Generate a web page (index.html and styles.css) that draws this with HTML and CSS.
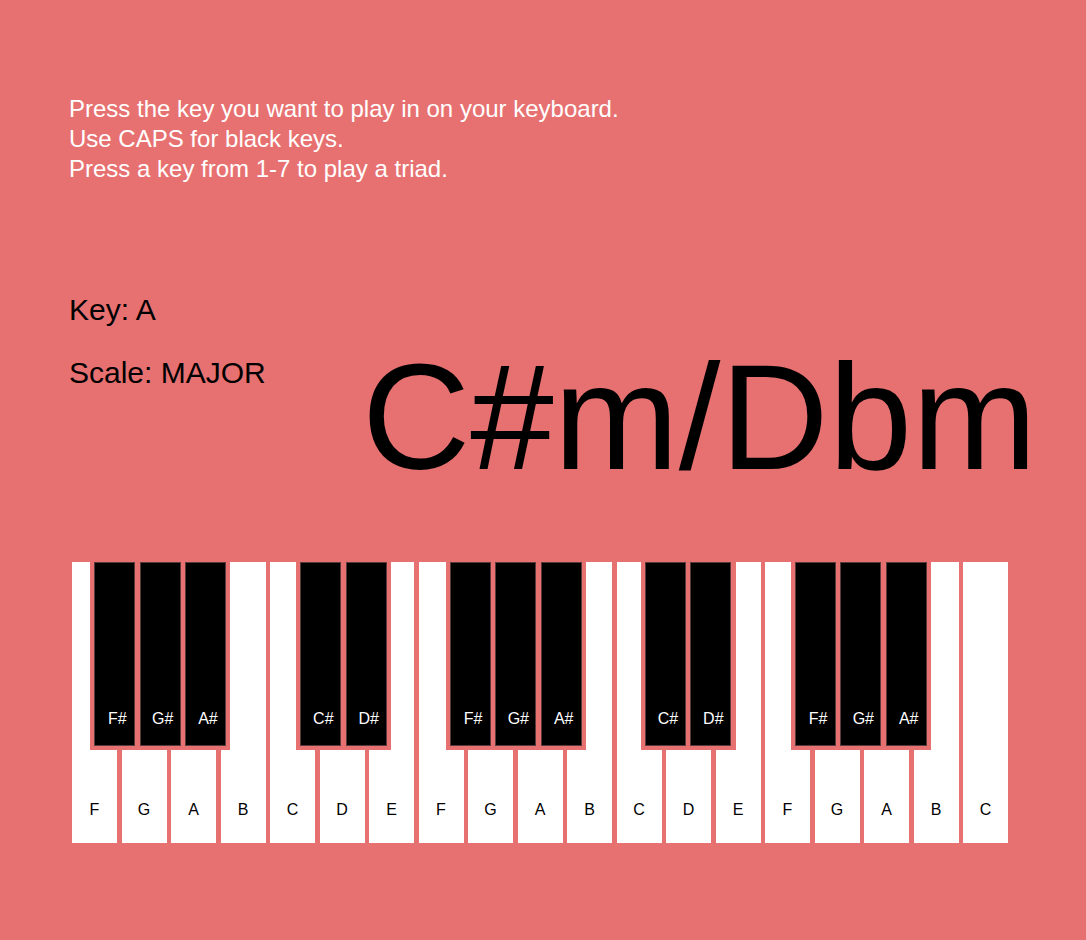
FILE: index.html
```html
<!DOCTYPE html>
<html lang="en">
<head>
<meta charset="utf-8">
<title>Piano Chords</title>
<link rel="stylesheet" href="styles.css">
</head>
<body>
<main class="page">
  <div class="instructions">
    <p>Press the key you want to play in on your keyboard.</p>
    <p>Use CAPS for black keys.</p>
    <p>Press a key from 1-7 to play a triad.</p>
  </div>
  <section class="info">
    <div class="labels">
      <p class="label">Key: A</p>
      <p class="label label-scale">Scale: MAJOR</p>
    </div>
    <div class="chord">C#m/Dbm</div>
  </section>
  <section class="keyboard">
    <div class="white-keys">
      <div class="white"><span>F</span></div>
      <div class="white"><span>G</span></div>
      <div class="white"><span>A</span></div>
      <div class="white"><span>B</span></div>
      <div class="white"><span>C</span></div>
      <div class="white"><span>D</span></div>
      <div class="white"><span>E</span></div>
      <div class="white"><span>F</span></div>
      <div class="white"><span>G</span></div>
      <div class="white"><span>A</span></div>
      <div class="white"><span>B</span></div>
      <div class="white"><span>C</span></div>
      <div class="white"><span>D</span></div>
      <div class="white"><span>E</span></div>
      <div class="white"><span>F</span></div>
      <div class="white"><span>G</span></div>
      <div class="white"><span>A</span></div>
      <div class="white"><span>B</span></div>
      <div class="white"><span>C</span></div>
    </div>
    <div class="black-group g1">
      <div class="black"><span>F#</span></div>
      <div class="black"><span>G#</span></div>
      <div class="black"><span>A#</span></div>
    </div>
    <div class="black-group g2">
      <div class="black"><span>C#</span></div>
      <div class="black"><span>D#</span></div>
    </div>
    <div class="black-group g3">
      <div class="black"><span>F#</span></div>
      <div class="black"><span>G#</span></div>
      <div class="black"><span>A#</span></div>
    </div>
    <div class="black-group g4">
      <div class="black"><span>C#</span></div>
      <div class="black"><span>D#</span></div>
    </div>
    <div class="black-group g5">
      <div class="black"><span>F#</span></div>
      <div class="black"><span>G#</span></div>
      <div class="black"><span>A#</span></div>
    </div>
  </section>
</main>
</body>
</html>
```
FILE: styles.css
```css
html, body {
  margin: 0;
  padding: 0;
}

body {
  background: #e77171;
  font-family: "Liberation Sans", Arial, sans-serif;
  color: #000;
  min-height: 940px;
}

p {
  margin: 0;
}

.page {
  padding: 94px 0 0 69px;
}

.instructions {
  color: #fff;
  font-size: 24px;
  line-height: 30px;
}

.info {
  display: flex;
  margin-top: 108px;
}

.labels {
  width: 293px;
  flex: none;
}

.label {
  font-size: 30px;
  line-height: 36px;
}

.label-scale {
  margin-top: 27px;
}

.chord {
  font-size: 150px;
  line-height: 150px;
  margin-top: 50px;
  white-space: nowrap;
}

.keyboard {
  position: relative;
  margin: 70px 0 0 3px;
  width: 936px;
  height: 281px;
}

.white-keys {
  display: flex;
  gap: 4.5px;
  height: 100%;
}

.white {
  width: 45px;
  flex: none;
  background: #fff;
  display: flex;
  flex-direction: column;
  justify-content: flex-end;
  align-items: center;
  padding-bottom: 24.5px;
  box-sizing: border-box;
  font-size: 16px;
  line-height: 18px;
}

.black-group {
  position: absolute;
  top: 0;
  display: flex;
  gap: 4.33px;
  padding: 0 4.33px 4.33px;
  background: #e77171;
}

.g1 { left: 18px; }
.g2 { left: 224px; }
.g3 { left: 373.7px; }
.g4 { left: 568.7px; }
.g5 { left: 718.7px; }

.black {
  width: 41px;
  height: 184px;
  box-sizing: border-box;
  background: #000;
  border: 1px solid #5a3a3a;
  color: #fff;
  font-size: 16px;
  line-height: 18px;
  display: flex;
  flex-direction: column;
  justify-content: flex-end;
  align-items: center;
  padding: 0 0 17px 5px;
}
```
